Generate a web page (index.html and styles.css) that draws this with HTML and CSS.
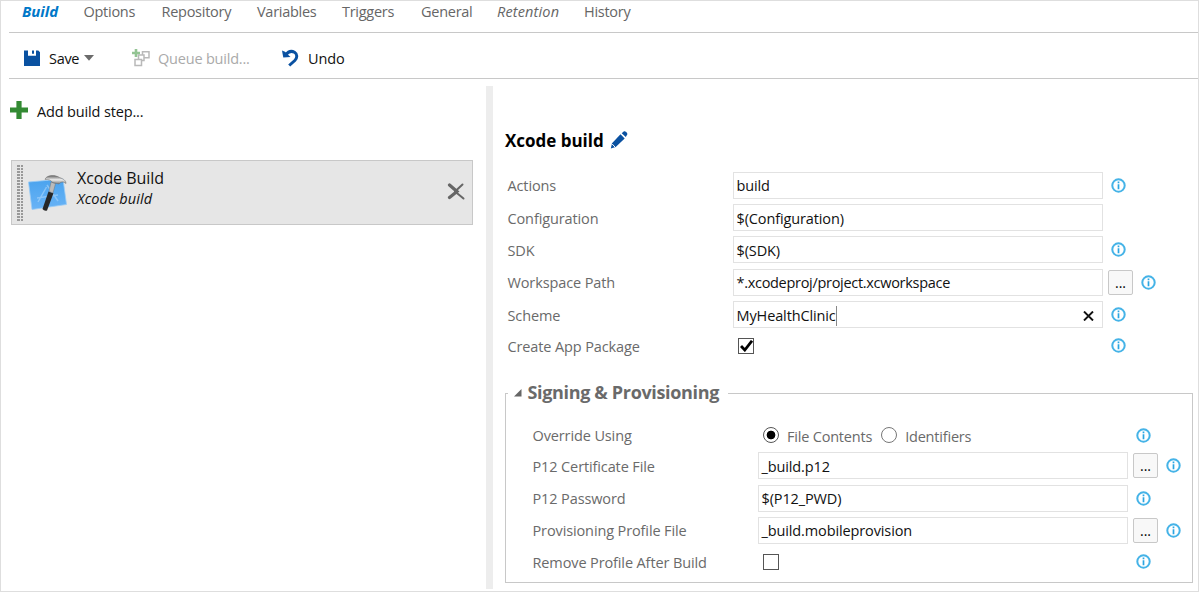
FILE: index.html
```html
<!DOCTYPE html>
<html lang="en">
<head>
<meta charset="utf-8">
<title>Build definition</title>
<link rel="stylesheet" href="styles.css">
</head>
<body>
<svg class="defs" width="0" height="0" aria-hidden="true">
  <symbol id="info" viewBox="0 0 15 15">
    <circle cx="7.5" cy="7.5" r="6.2" fill="#fff" stroke="#45b3e7" stroke-width="2"/>
    <path d="M7.5 3.6v1.600M7.500 6.200v5" stroke="#2aa5e2" stroke-width="1.700"/>
  </symbol>
</svg>
<div class="page">
  <nav class="tabs">
    <a class="tab tab-active">Build</a>
    <a class="tab">Options</a>
    <a class="tab">Repository</a>
    <a class="tab">Variables</a>
    <a class="tab">Triggers</a>
    <a class="tab">General</a>
    <a class="tab tab-italic">Retention</a>
    <a class="tab">History</a>
  </nav>
  <div class="toolbar">
    <div class="tool tool-save">
      <svg width="16" height="16" viewBox="0 0 16 16"><path fill="#0a51a1" d="M0 .5h4v5.200h8V.500h2.300L16 2.200V16H0z"/><path fill="#0a51a1" d="M8 .5h2v3.300H8z"/></svg>
      <span class="txt">Save</span>
      <svg class="caret" width="10" height="6" viewBox="0 0 10 6"><path fill="#6b6b6b" d="M0 0h10L5 5.800z"/></svg>
    </div>
    <div class="tool tool-queue">
      <svg width="18" height="18" viewBox="0 0 18 18"><g fill="#fff" stroke="#b9b9b9" stroke-width="1.500"><path d="M10.500 2.800h6.500v6h-6.500z"/><path d="M6.500 6h5.500v5.500H6.500z"/><path d="M3 10.500h6.500v6H3z"/></g><path fill="#93c493" d="M2.700 0h2.600v2.700H8v2.600H5.300V8H2.700V5.300H0V2.700h2.700z"/></svg>
      <span class="txt">Queue build...</span>
    </div>
    <div class="tool tool-undo">
      <svg width="17" height="18" viewBox="0 0 17 18"><path d="M3.500 6C6 2.800 9.500 1.600 12.500 3.300c3.200 2 2.700 5.600.3 8.200L7.200 16.500" fill="none" stroke="#0a51a1" stroke-width="3"/><path fill="#0a51a1" d="M0 1.500l3 1.300L8.500 8 1.300 8.600z"/></svg>
      <span class="txt">Undo</span>
    </div>
  </div>
  <div class="main">
    <section class="steps">
      <div class="add">
        <svg width="18" height="18" viewBox="0 0 18 18"><path fill="#338a33" d="M6.400 0h5.200v6.400H18v5.200h-6.400V18H6.400v-6.400H0V6.400h6.400z"/></svg>
        <span class="txt">Add build step...</span>
      </div>
      <div class="step">
        <div class="grip"></div>
        <svg class="xcode" width="40" height="38" viewBox="0 0 40 38">
          <defs>
            <linearGradient id="sheet" x1="0" y1="0" x2="0" y2="1"><stop offset="0" stop-color="#4aa3ee"/><stop offset="1" stop-color="#69b3f6"/></linearGradient>
            <linearGradient id="steel" x1="0" y1="0" x2="0" y2="1"><stop offset="0" stop-color="#666"/><stop offset=".5" stop-color="#eee"/><stop offset="1" stop-color="#777"/></linearGradient>
          </defs>
          <path fill="url(#sheet)" stroke="#9bcbf5" stroke-width=".8" d="M.5 8L35 5l3.500 25.500L4 35.500z"/>
          <path fill="none" stroke="#a5d2fb" stroke-width="1.500" d="M10 28l8.500-15M19 11l11 16M9 24l21-3" opacity=".65"/>
          <path fill="#272727" d="M20.500 17.500l5 1.700-6.500 17.300q-2.800.8-4.500-1.500z"/>
          <path fill="#bbb" stroke="#666" stroke-width=".4" d="M23 8l4.500 1.500-2.500 9.500-4-1.500z"/>
          <path fill="url(#steel)" stroke="#6b6b6b" stroke-width=".5" d="M17 5.500C18 1 27 .5 31.500 3.500c4 1.500 6.500 3 6.500 6-3-2.200-5-1.700-7 .5l-6.500-1.500c-1-2-4-3.500-7.500-3z"/>
        </svg>
        <div class="step-text"><div class="step-title">Xcode Build</div><div class="step-sub">Xcode build</div></div>
        <svg class="remove" width="18" height="17" viewBox="0 0 18 17"><path d="M2.500 2L10 8.500 2.500 14.500" fill="none" stroke="#666" stroke-width="3.200" stroke-linecap="round"/><path d="M8 8.500L15.500 1.500M8 8.500l8.500 7" fill="none" stroke="#666" stroke-width="2" stroke-linecap="round"/></svg>
      </div>
    </section>
    <div class="splitter"></div>
    <section class="details">
      <div class="heading">
        <h1>Xcode build</h1>
        <svg width="18" height="18" viewBox="0 0 18 18"><path fill="#0a51a1" d="M10.500 3.200l4.200 4.200-9 8.700L.800 17.500 2 12.200zM11.700 2.200L14 .3q2.500-.5 3.500 2.700L15.800 6z"/><path d="M2.200 13l2.800 3" stroke="#fff" stroke-width="1"/></svg>
      </div>
      <div class="row"><label>Actions</label><div class="field">build</div><svg class="info"><use href="#info"/></svg></div>
      <div class="row"><label>Configuration</label><div class="field">$(Configuration)</div></div>
      <div class="row"><label>SDK</label><div class="field">$(SDK)</div><svg class="info"><use href="#info"/></svg></div>
      <div class="row"><label>Workspace Path</label><div class="field field-path">*.xcodeproj/project.xcworkspace</div><button class="browse">...</button><svg class="info"><use href="#info"/></svg></div>
      <div class="row"><label>Scheme</label><div class="field"><span class="typed">MyHealthClinic</span><svg class="clear" width="11" height="10" viewBox="0 0 11 10"><path d="M1 .5l9 9M10 .5l-9 9" stroke="#111" stroke-width="1.900"/></svg></div><svg class="info"><use href="#info"/></svg></div>
      <div class="row row-check"><label>Create App Package</label><div class="slot"><span class="check"><svg width="13" height="12" viewBox="0 0 13 12"><path d="M1 6l3.800 4L12 .8" fill="none" stroke="#000" stroke-width="2.800"/></svg></span></div><svg class="info"><use href="#info"/></svg></div>
      <fieldset>
        <legend><svg width="8" height="8" viewBox="0 0 8 8"><path fill="#666" d="M7.500 0v7.500H0z"/></svg><span class="legend-text">Signing &amp; Provisioning</span></legend>
        <div class="row row-radio"><label>Override Using</label><div class="slot"><span class="radio radio-on"></span><span class="option">File Contents</span><span class="radio"></span><span class="option">Identifiers</span></div><svg class="info"><use href="#info"/></svg></div>
        <div class="row"><label>P12 Certificate File</label><div class="field">_build.p12</div><button class="browse">...</button><svg class="info"><use href="#info"/></svg></div>
        <div class="row"><label>P12 Password</label><div class="field">$(P12_PWD)</div><svg class="info"><use href="#info"/></svg></div>
        <div class="row"><label>Provisioning Profile File</label><div class="field">_build.mobileprovision</div><button class="browse">...</button><svg class="info"><use href="#info"/></svg></div>
        <div class="row row-check"><label>Remove Profile After Build</label><div class="slot"><span class="check"></span></div><svg class="info"><use href="#info"/></svg></div>
      </fieldset>
    </section>
  </div>
</div>
</body>
</html>
```
FILE: styles.css
```css
* { box-sizing: border-box; }
body { margin: 0; font: 14.5px/20px "Open Sans", "Noto Sans", sans-serif; letter-spacing: -0.3px; color: #111; background: #fff; }
svg { display: block; flex: none; }
.defs { position: absolute; }
.page { width: 1199px; height: 592px; border: 1px solid #dedede; padding-left: 8px; overflow: hidden; display: flex; flex-direction: column; }
.tabs { height: 32px; flex: none; border-bottom: 1px solid #c8c8c8; padding: 1px 0 0 13px; display: grid; grid-template-columns: 61.500px 78px 95.500px 85px 79px 76px 87px 80px; white-space: nowrap; color: #666; }
.tab { letter-spacing: -.27px; }
.tab-active { color: #0078c8; font-weight: 700; font-style: italic; font-size: 15px; letter-spacing: 0; line-height: 18px; }
.tab-italic { font-style: italic; letter-spacing: .15px; }
.toolbar { height: 46px; flex: none; border-bottom: 1px solid #c8c8c8; display: flex; align-items: center; padding: 4px 0 0 15px; white-space: nowrap; }
.tool { display: flex; align-items: center; }
.tool .txt { padding-top: 2px; }
.tool-save { width: 108px; gap: 9px; }
.caret { margin-left: -4px; }
.tool-queue { width: 150px; gap: 8px; color: #aaa; letter-spacing: -.2px; }
.tool-undo { gap: 9px; letter-spacing: -.15px; }
.main { flex: 1; display: flex; padding-top: 7px; min-height: 0; }
.steps { width: 477px; padding: 13px 13px 0 1px; flex: none; }
.add { display: flex; align-items: center; gap: 9px; height: 22px; letter-spacing: -.15px; }
.add .txt { padding-top: 4px; }
.step { margin: 39px 0 0 1px; height: 65px; width: 462px; border: 1px solid #c8c8c8; background: #e6e6e6; display: flex; align-items: flex-start; }
.grip { width: 6px; height: 56px; margin: 4px 0 0 5px; background: repeating-linear-gradient(90deg, transparent 0 2.500px, #e6e6e6 2.500px 3.500px, transparent 3.500px 6px), repeating-linear-gradient(180deg, #999 0 2px, #e6e6e6 2px 3px); }
.xcode { margin: 13px 0 0 5px; }
.step-text { margin: 7px 0 0 9px; flex: 1; }
.step-title { font-size: 16px; letter-spacing: -.05px; }
.step-sub { font-style: italic; font-size: 14.5px; letter-spacing: .1px; padding-top: 1px; }
.remove { margin: 22px 7px 0 0; }
.splitter { width: 7px; height: 503px; background: #ededed; flex: none; }
.details { flex: 1; padding-left: 12px; }
.heading { display: flex; align-items: flex-start; gap: 6px; height: 83px; padding-top: 44px; }
.heading h1 { margin: 0; font-size: 17px; line-height: 22px; letter-spacing: -.02px; color: #000; }
.heading svg { margin-top: 1px; }
.row { display: flex; align-items: center; height: 32.400px; padding-left: 2px; }
.row label { width: 226px; flex: none; color: #6a6a6a; padding: 2px 0 0 .5px; white-space: nowrap; letter-spacing: -.12px; }
.field { width: 370px; height: 27px; border: 1px solid #e2e2e2; padding: 2px 7px 0 2.500px; display: flex; align-items: center; flex: none; letter-spacing: -.12px; }
.field-path { letter-spacing: -.3px; }
.typed { border-right: 1px solid #888; }
.clear { margin: 0 1px 0 auto; }
.info { width: 15px; height: 15px; margin-left: 8px; }
.browse { width: 25px; height: 25px; margin: 0 0 0 5px; padding: 0; border: 1px solid #c8c8c8; border-radius: 2px; background: #f8f8f8; font: 14px/23px "Open Sans", sans-serif; }
.slot { width: 370px; flex: none; display: flex; align-items: center; padding-left: 5px; color: #6a6a6a; }
.row-check { height: 30px; }
.check { width: 16px; height: 16px; border: 1px solid #555; display: flex; align-items: center; justify-content: center; }
fieldset { width: 688px; height: 200px; margin: 22.500px 0 0; padding: 18px 0 0 24px; border: 1px solid #c8c8c8; min-width: 0; }
legend { display: flex; align-items: center; gap: 5.500px; margin-left: -22px; padding: 0 9px 0 6px; color: #6a6a6a; font-size: 18px; font-weight: 700; line-height: 20px; height: 20px; letter-spacing: -.34px; }
.legend-text { margin-top: -2px; }
.row-radio { height: 28px; }
.radio { width: 16px; height: 16px; border: 1px solid #777; border-radius: 50%; margin-right: 8px; flex: none; }
.radio-on { border-color: #555; background: radial-gradient(circle, #000 0 4px, #fff 4.700px); }
.option { margin-right: 9px; padding-top: 3px; letter-spacing: -.2px; }
```
